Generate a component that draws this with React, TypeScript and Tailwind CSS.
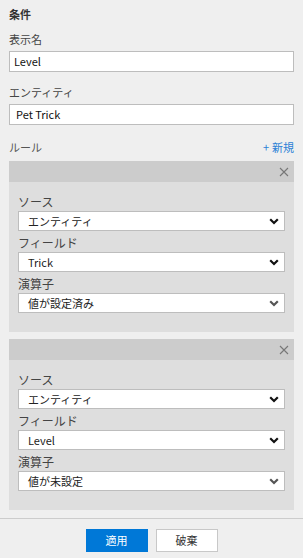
import React from "react";

const font = { fontFamily: '"Noto Sans CJK JP", "Noto Sans", sans-serif' };

function Chevron({ muted = false }: { muted?: boolean }) {
  return (
    <svg width="10" height="7" viewBox="0 0 10 7" className="shrink-0">
      <polyline
        points="1.2,1.2 5,5 8.8,1.2"
        fill="none"
        stroke={muted ? "#555" : "#111"}
        strokeWidth="2.2"
      />
    </svg>
  );
}

function Select({ value, muted }: { value: string; muted?: boolean }) {
  return (
    <div className="mt-px flex h-[20px] items-center justify-between border border-[#bdbdbd] bg-white pl-[9px] pr-[5px] text-[11px] leading-none text-[#222]">
      <span>{value}</span>
      <Chevron muted={muted} />
    </div>
  );
}

function RuleCard({ field, op }: { field: string; op: string }) {
  return (
    <div className="bg-[#dedede]">
      <div className="flex h-[21px] items-center justify-end bg-[#cccccc] pr-[5px]">
        <svg width="10" height="10" viewBox="0 0 10 10">
          <path d="M1 1L9 9M9 1L1 9" stroke="#777" strokeWidth="1.1" />
        </svg>
      </div>
      <div className="px-[9px] pt-[12px] pb-[19px]">
        <div className="h-[16px] text-[12px] leading-[16px] text-[#444]">ソース</div>
        <Select value="エンティティ" />
        <div className="mt-[4px] h-[16px] text-[12px] leading-[16px] text-[#444]">フィールド</div>
        <Select value={field} />
        <div className="mt-[4px] h-[16px] text-[12px] leading-[16px] text-[#444]">演算子</div>
        <Select value={op} muted />
      </div>
    </div>
  );
}

export default function App() {
  return (
    <div style={font} className="flex h-[558px] w-[303px] flex-col bg-[#efefef]">
      <div className="flex-1 px-[9px] pt-[6px]">
        <div className="h-[16px] text-[11px] font-bold leading-[16px] text-[#333]">条件</div>

        <div className="mt-[9px] h-[16px] text-[11px] leading-[16px] text-[#444]">表示名</div>
        <div className="mt-[4px] flex h-[21px] items-center border border-[#bdbdbd] bg-white pl-[4px] text-[11px] text-[#111]">
          Level
        </div>

        <div className="mt-[12px] h-[16px] text-[11px] leading-[16px] text-[#444]">エンティティ</div>
        <div className="mt-[4px] flex h-[21px] items-center border border-[#bdbdbd] bg-white pl-[6px] text-[11px] text-[#111]">
          Pet Trick
        </div>

        <div className="mt-[14px] flex h-[16px] items-center justify-between text-[11px] leading-[16px]">
          <span className="text-[#555]">ルール</span>
          <span className="text-[#2b7fd6]">
            <span className="mr-[3px]">+</span>新規
          </span>
        </div>

        <div className="mt-[6px] flex flex-col gap-[7px]">
          <RuleCard field="Trick" op="値が設定済み" />
          <RuleCard field="Level" op="値が未設定" />
        </div>
      </div>

      <div className="flex h-[40px] items-start justify-center gap-[8px] border-t border-[#cccccc] pt-[10px]">
        <button className="h-[23px] w-[62px] bg-[#0078d7] text-[11px] text-white">適用</button>
        <button className="h-[23px] w-[62px] border border-[#c8c8c8] bg-white text-[11px] text-[#333]">
          破棄
        </button>
      </div>
    </div>
  );
}
